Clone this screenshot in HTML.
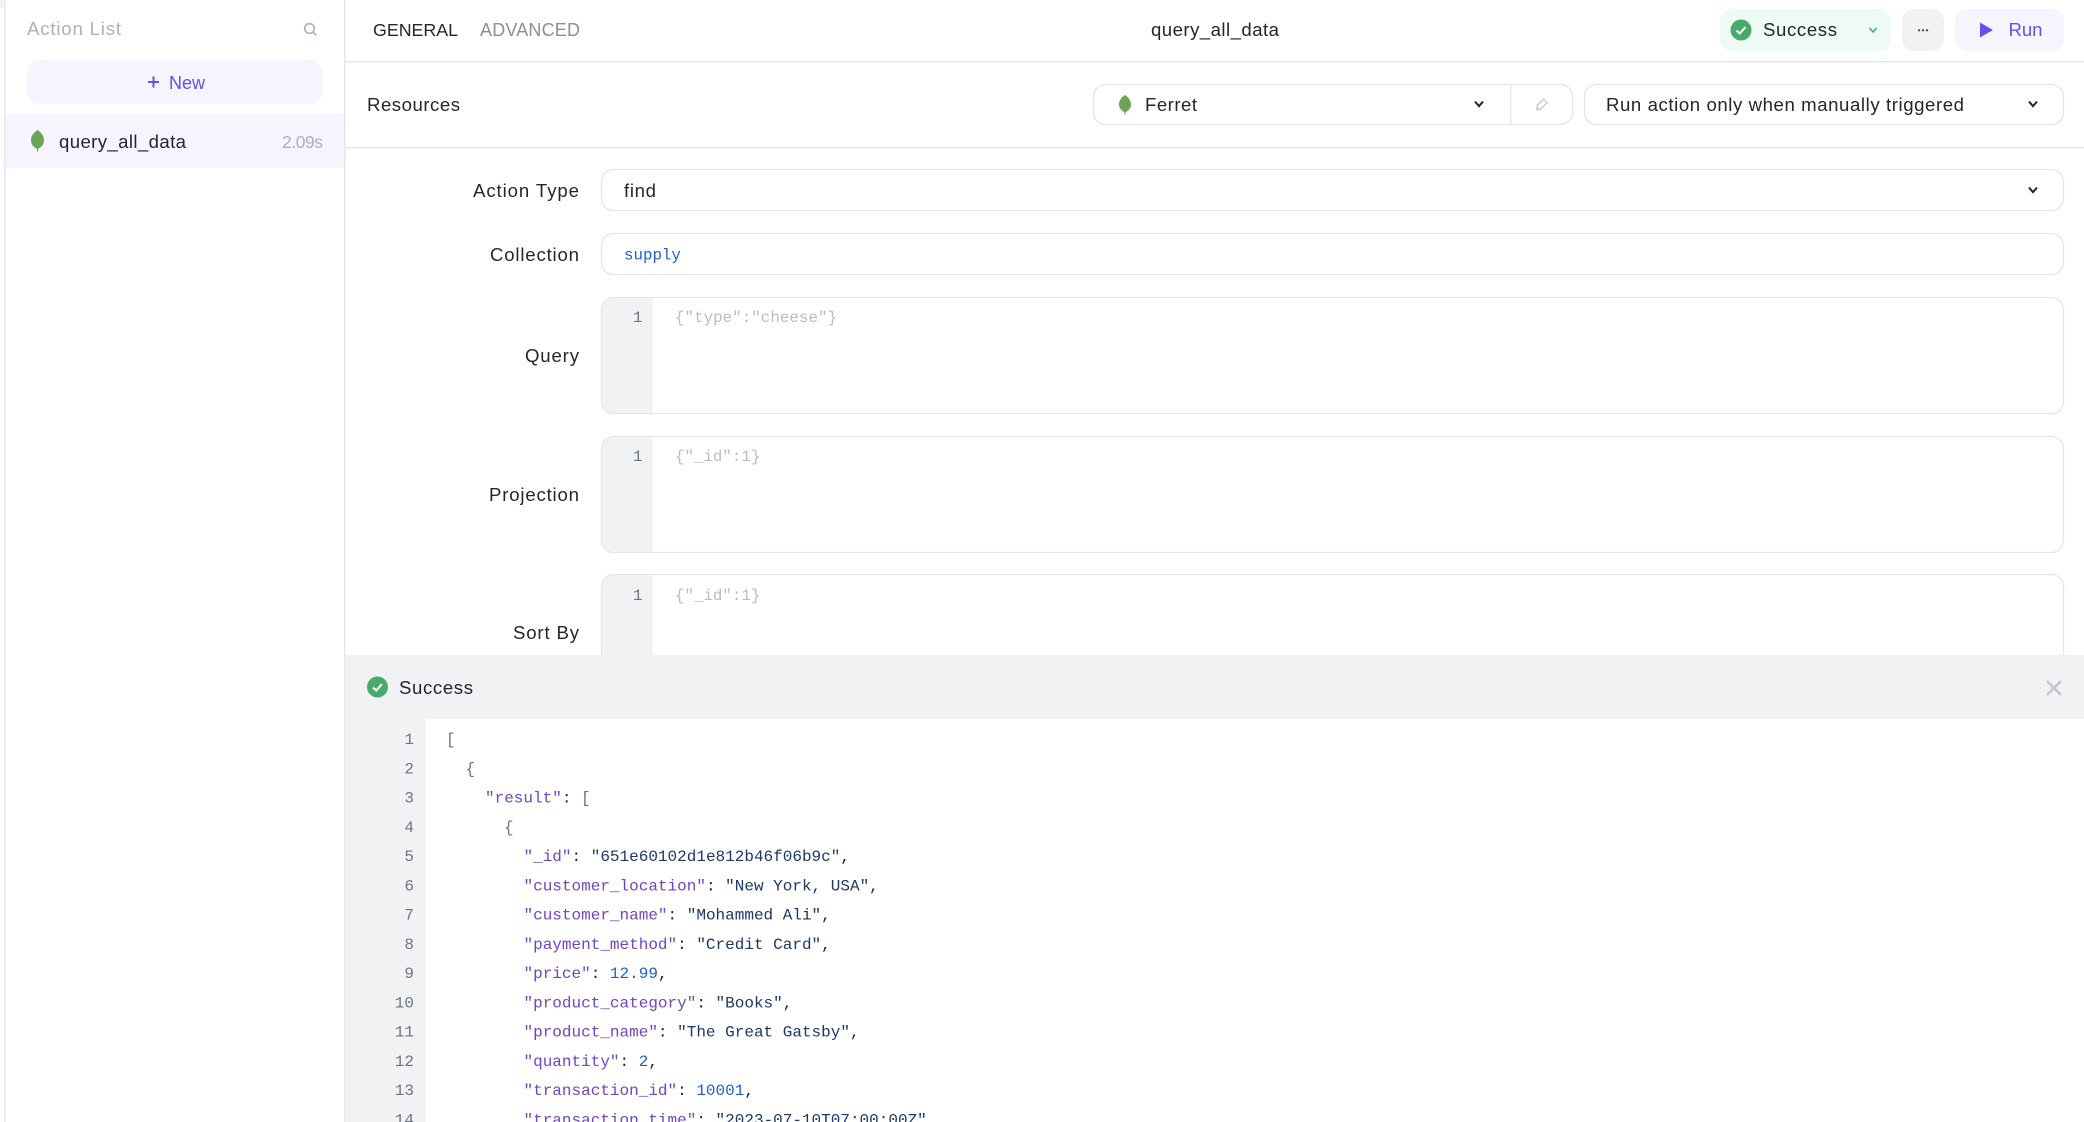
<!DOCTYPE html>
<html lang="en">
<head>
<meta charset="utf-8">
<title>query_all_data</title>
<style>
html,body{margin:0;padding:0;background:#fff;width:2084px;height:1122px;overflow:hidden}
svg{display:block}
text{font-family:"Liberation Sans",sans-serif;font-size:18.6px;fill:#23262f;white-space:pre}
.m{font-family:"Liberation Mono",monospace;font-size:16px}
.f{font-family:"Liberation Mono",monospace;font-size:15.8px}
.n{fill:#6f7480}
.p{fill:#b9bcc4}
.b{fill:#6b7280}
.k{fill:#6f45c4}
.s{fill:#1c3768}
.d{fill:#1f5fc8}
.c{fill:#23262f}
.box{fill:#fff;stroke:#e5e6ea;stroke-width:1.33}
</style>
</head>
<body>
<svg width="2084" height="1122" viewBox="0 0 2084 1122" xmlns="http://www.w3.org/2000/svg">
<defs>
<path id="leaf" d="M6.5 0C10.5 2.6 13 6.2 13 10.2C13 14.6 10.2 17.2 7.2 18.6L7 21.5L6 21.5L5.8 18.6C2.8 17.2 0 14.6 0 10.2C0 6.2 2.5 2.6 6.5 0Z"/>
<path id="chev" d="M-4 -2.5L0 2.2L4 -2.5" fill="none" stroke="#23262f" stroke-width="2" stroke-linejoin="miter"/>
</defs>
<rect width="2084" height="1122" fill="#fff"/>
<rect x="0" y="0" width="3" height="8" fill="#f0f0f8"/>
<rect x="4" y="0" width="1.4" height="1122" fill="#e5e6ea"/>
<rect x="344" y="0" width="1.4" height="1122" fill="#e5e6ea"/>

<!-- sidebar -->
<text x="27" y="35" textLength="94" style="fill:#adb0ba">Action List</text>
<g fill="none" stroke="#adb0ba" stroke-width="1.6"><circle cx="309.5" cy="28.5" r="4.8"/><path d="M313 32L316.2 35.2"/></g>
<rect x="27" y="60" width="296" height="44" rx="13" fill="#f6f5ff"/>
<path d="M148 82H159M153.5 76.5V87.5" stroke="#6650e8" stroke-width="2" fill="none"/>
<text x="169" y="89" textLength="36" style="fill:#6650e8;font-size:18px">New</text>
<rect x="5.4" y="114" width="338.6" height="54" fill="#f6f5ff"/>
<use href="#leaf" x="31" y="130" fill="#6aa457"/>
<text x="59" y="148" textLength="127">query_all_data</text>
<text x="282" y="148" textLength="41" style="fill:#adb0ba;font-size:17.5px">2.09s</text>

<!-- header -->
<rect x="345" y="61" width="1739" height="1.4" fill="#e5e6ea"/>
<text x="373" y="36" textLength="85" style="font-size:17.8px">GENERAL</text>
<text x="480" y="36" textLength="100" style="fill:#8b8f9a;font-size:18px">ADVANCED</text>
<text x="1151" y="36" textLength="128">query_all_data</text>

<rect x="1720" y="9" width="171" height="42" rx="12" fill="#eefbf5"/>
<circle cx="1741" cy="30" r="10.5" fill="#4aa96c"/>
<path d="M1736.5 30.5L1739.8 33.5L1745.5 27" fill="none" stroke="#fff" stroke-width="2"/>
<text x="1763" y="36" textLength="74">Success</text>
<path d="M1869.5 28L1873 32L1876.5 28" fill="none" stroke="#4aa96c" stroke-width="1.6"/>
<rect x="1902" y="9" width="42" height="42" rx="12" fill="#f1f2f4"/>
<g fill="#4b4f5a"><circle cx="1919" cy="30.3" r="1.2"/><circle cx="1923" cy="30.3" r="1.2"/><circle cx="1927" cy="30.3" r="1.2"/></g>
<rect x="1955" y="9" width="109" height="42" rx="12" fill="#f6f5ff"/>
<path d="M1980 22.5L1993 30L1980 37.5Z" fill="#6650e8"/>
<text x="2008.5" y="36" textLength="34" style="fill:#6650e8">Run</text>

<!-- resources row -->
<rect x="345" y="147" width="1739" height="1.4" fill="#e5e6ea"/>
<text x="367" y="111" textLength="93">Resources</text>
<rect class="box" x="1093.5" y="84.5" width="479" height="40" rx="12"/>
<rect x="1510" y="85" width="1.33" height="39" fill="#e5e6ea"/>
<use href="#leaf" fill="#6aa457" transform="translate(1119 95) scale(.92)"/>
<text x="1145" y="111" textLength="52">Ferret</text>
<use href="#chev" x="1479" y="104"/>
<path d="M1536.8 109.8L1537.6 105L1543.5 99.3L1547 102.7L1541.2 108.5Z" fill="none" stroke="#c5c8d0" stroke-width="1.4"/>
<rect class="box" x="1584.5" y="84.5" width="479" height="40" rx="12"/>
<text x="1606" y="111" textLength="358">Run action only when manually triggered</text>
<use href="#chev" x="2033" y="104"/>

<!-- form -->
<text x="473" y="197" textLength="106">Action Type</text>
<rect class="box" x="601.5" y="169.5" width="1462" height="41" rx="12"/>
<text x="624" y="197" textLength="32">find</text>
<use href="#chev" x="2033" y="190"/>

<text x="490" y="261" textLength="89">Collection</text>
<rect class="box" x="601.5" y="233.5" width="1462" height="41" rx="12"/>
<text class="f d" x="624" y="259.5">supply</text>

<text x="525" y="362" textLength="54">Query</text>
<rect class="box" x="601.5" y="297.5" width="1462" height="116" rx="12"/>
<path d="M652.5 298.2V412.8H613.5A11.3 11.3 0 0 1 602.2 401.5V309.5A11.3 11.3 0 0 1 613.5 298.2Z" fill="#f1f2f4"/>
<text class="f n" x="633" y="322">1</text>
<text class="f p" x="675" y="322" textLength="162">{"type":"cheese"}</text>

<text x="489" y="501" textLength="90">Projection</text>
<rect class="box" x="601.5" y="436.5" width="1462" height="116" rx="12"/>
<path d="M652.5 437.2V551.8H613.5A11.3 11.3 0 0 1 602.2 540.5V448.5A11.3 11.3 0 0 1 613.5 437.2Z" fill="#f1f2f4"/>
<text class="f n" x="633" y="461">1</text>
<text class="f p" x="675" y="461">{"_id":1}</text>

<text x="513" y="639" textLength="66">Sort By</text>
<rect class="box" x="601.5" y="574.5" width="1462" height="116" rx="12"/>
<path d="M652.5 575.2V689.8H613.5A11.3 11.3 0 0 1 602.2 678.5V586.5A11.3 11.3 0 0 1 613.5 575.2Z" fill="#f1f2f4"/>
<text class="f n" x="633" y="600">1</text>
<text class="f p" x="675" y="600">{"_id":1}</text>

<!-- result panel -->
<rect x="345.4" y="655" width="1738.6" height="64" fill="#f1f2f4"/>
<circle cx="377.5" cy="687" r="10.5" fill="#4aa96c"/>
<path d="M373 687.5L376.3 690.5L382 684" fill="none" stroke="#fff" stroke-width="2"/>
<text x="399" y="694" textLength="74">Success</text>
<path d="M2047 681L2061 695M2061 681L2047 695" stroke="#c5c8d0" stroke-width="2.6" fill="none"/>

<rect x="345.4" y="719" width="80" height="403" fill="#f1f2f4"/>
<text class="m n" x="414" y="744" text-anchor="end">1</text>
<text class="m n" x="414" y="773.3" text-anchor="end">2</text>
<text class="m n" x="414" y="802.5" text-anchor="end">3</text>
<text class="m n" x="414" y="831.8" text-anchor="end">4</text>
<text class="m n" x="414" y="861.1" text-anchor="end">5</text>
<text class="m n" x="414" y="890.4" text-anchor="end">6</text>
<text class="m n" x="414" y="919.6" text-anchor="end">7</text>
<text class="m n" x="414" y="948.9" text-anchor="end">8</text>
<text class="m n" x="414" y="978.2" text-anchor="end">9</text>
<text class="m n" x="414" y="1007.4" text-anchor="end">10</text>
<text class="m n" x="414" y="1036.7" text-anchor="end">11</text>
<text class="m n" x="414" y="1066" text-anchor="end">12</text>
<text class="m n" x="414" y="1095.2" text-anchor="end">13</text>
<text class="m n" x="414" y="1124.5" text-anchor="end">14</text>
<text class="m b" x="446" y="744">[</text>
<text class="m b" x="465.5" y="773.3">{</text>
<text class="m" x="485" y="802.5"><tspan class="k">"result"</tspan><tspan class="c">: </tspan><tspan class="b">[</tspan></text>
<text class="m b" x="504" y="831.8">{</text>
<text class="m" x="523.5" y="861.1"><tspan class="k">"_id"</tspan><tspan class="c">: </tspan><tspan class="s">"651e60102d1e812b46f06b9c"</tspan><tspan class="c">,</tspan></text>
<text class="m" x="523.5" y="890.4"><tspan class="k">"customer_location"</tspan><tspan class="c">: </tspan><tspan class="s">"New York, USA"</tspan><tspan class="c">,</tspan></text>
<text class="m" x="523.5" y="919.6"><tspan class="k">"customer_name"</tspan><tspan class="c">: </tspan><tspan class="s">"Mohammed Ali"</tspan><tspan class="c">,</tspan></text>
<text class="m" x="523.5" y="948.9"><tspan class="k">"payment_method"</tspan><tspan class="c">: </tspan><tspan class="s">"Credit Card"</tspan><tspan class="c">,</tspan></text>
<text class="m" x="523.5" y="978.2"><tspan class="k">"price"</tspan><tspan class="c">: </tspan><tspan class="d">12.99</tspan><tspan class="c">,</tspan></text>
<text class="m" x="523.5" y="1007.4"><tspan class="k">"product_category"</tspan><tspan class="c">: </tspan><tspan class="s">"Books"</tspan><tspan class="c">,</tspan></text>
<text class="m" x="523.5" y="1036.7"><tspan class="k">"product_name"</tspan><tspan class="c">: </tspan><tspan class="s">"The Great Gatsby"</tspan><tspan class="c">,</tspan></text>
<text class="m" x="523.5" y="1066"><tspan class="k">"quantity"</tspan><tspan class="c">: </tspan><tspan class="d">2</tspan><tspan class="c">,</tspan></text>
<text class="m" x="523.5" y="1095.2"><tspan class="k">"transaction_id"</tspan><tspan class="c">: </tspan><tspan class="d">10001</tspan><tspan class="c">,</tspan></text>
<text class="m" x="523.5" y="1124.5"><tspan class="k">"transaction_time"</tspan><tspan class="c">: </tspan><tspan class="s">"2023-07-10T07:00:00Z"</tspan></text>
</svg>
</body>
</html>
